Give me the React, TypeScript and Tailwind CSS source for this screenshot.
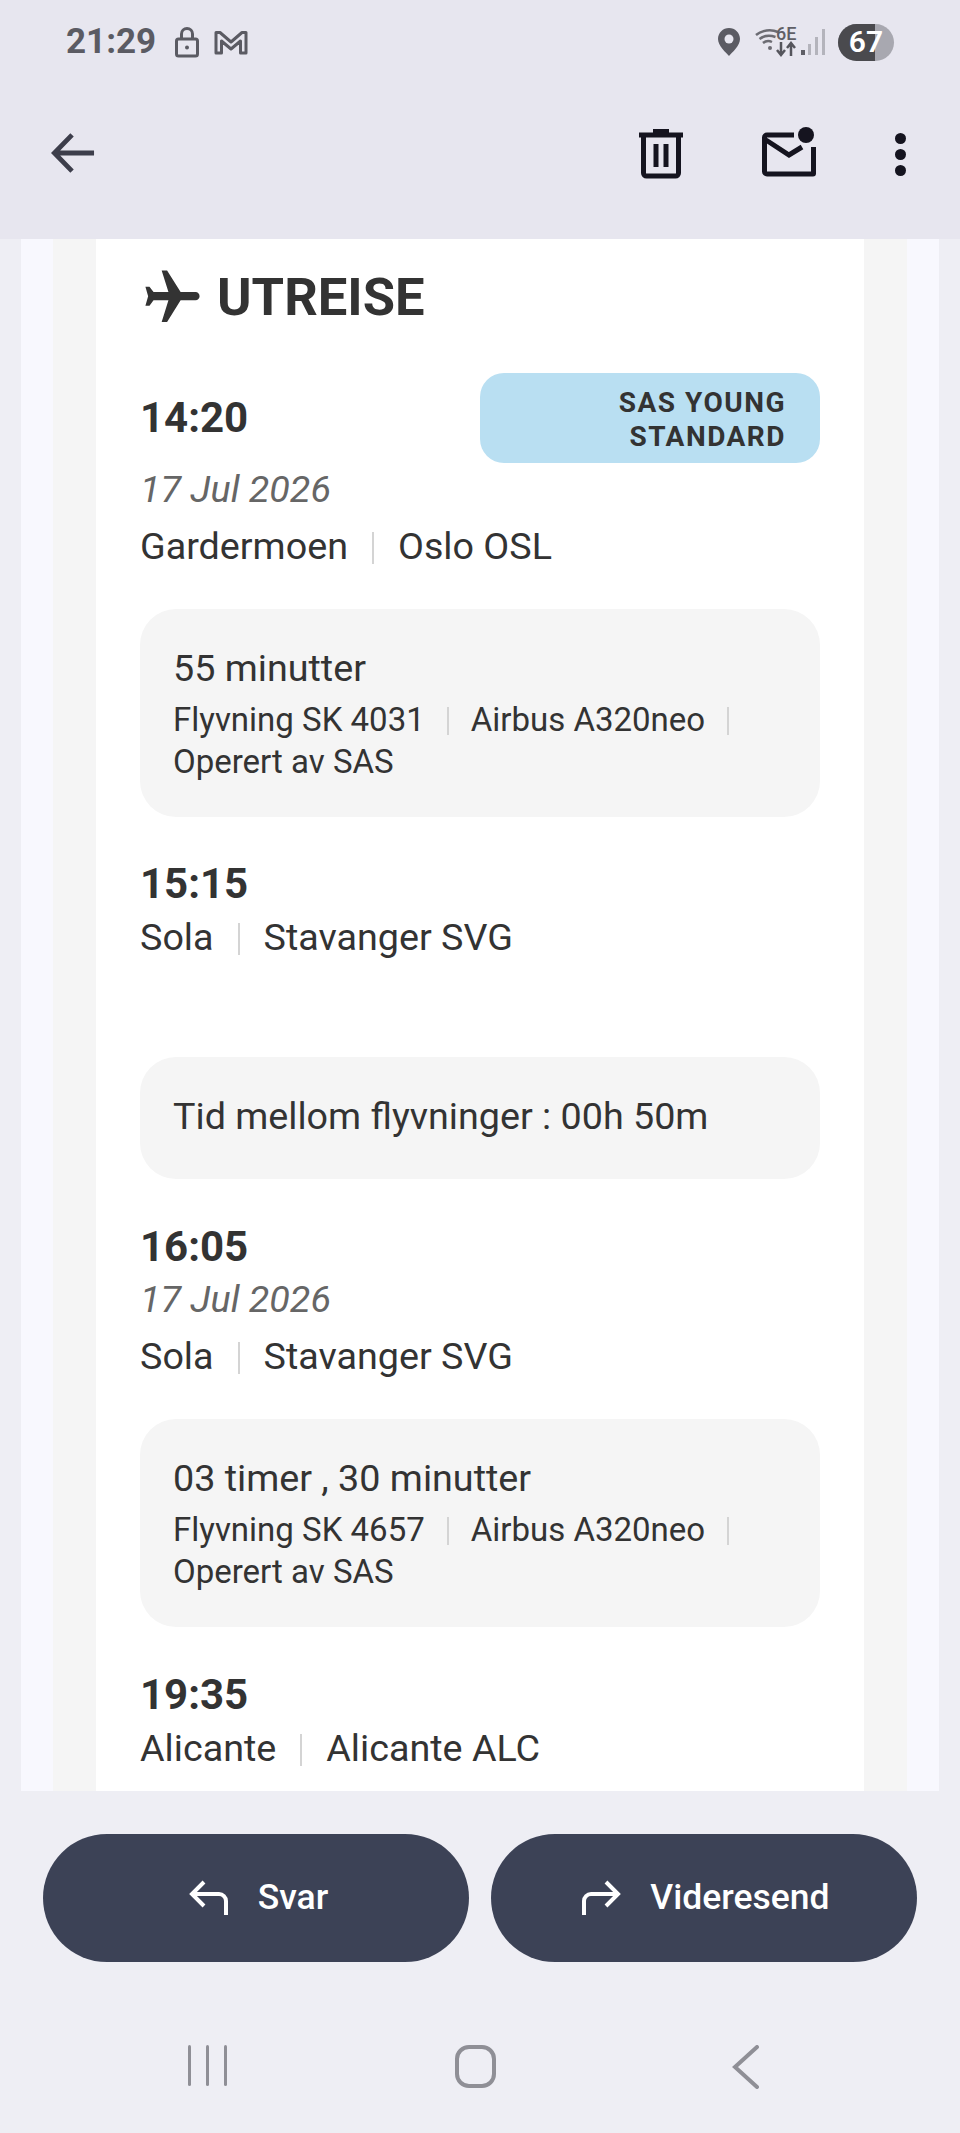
import React from 'react';
import { MdFlight } from 'react-icons/md';

const FONT = "font-['Roboto','Liberation_Sans',sans-serif]";

// Tynn skillestrek mellom feltene i en rad
const Sep = () => <span className="mx-[24px] inline-block h-[32px] w-[2px] bg-[#d4d4d4] align-[-5px]" />;

const Place = ({ a, b }: { a: string; b: string }) => (
  <div className="text-[37.7px] leading-[48px] text-[#333333]">
    {a}
    <Sep />
    {b}
  </div>
);

const Time = ({ children }: { children: string }) => (
  <div className="text-[42px] font-bold leading-[50px] text-[#333333]">{children}</div>
);

const DateText = () => <div className="text-[37.7px] italic leading-[48px] text-[#666666]">17 Jul 2026</div>;

const FlightCard = ({ duration, flight }: { duration: string; flight: string }) => (
  <div className="rounded-[36px] bg-[#f5f5f5] px-[33px] pb-[34px] pt-[35px] text-[#333333]">
    <div className="text-[37.7px] leading-[48px]">{duration}</div>
    <div className="mt-[7px] text-[33px] leading-[42px]">
      {flight}
      <span className="mx-[22px] inline-block h-[28px] w-[2px] bg-[#d4d4d4] align-[-4px]" />
      Airbus A320neo
      <span className="mx-[22px] inline-block h-[28px] w-[2px] bg-[#d4d4d4] align-[-4px]" />
      <br />
      Operert av SAS
    </div>
  </div>
);

const StatusBar = () => (
  <div className="flex h-[84px] items-center pl-[66px] pr-[66px] text-[#5b5b63]">
    <span className="text-[35px] font-bold">21:29</span>
    <svg className="ml-[18px]" width="26" height="32" viewBox="0 0 26 32" fill="none" stroke="#5b5b63" strokeWidth="3">
      <rect x="2.5" y="13" width="21" height="17" rx="2" />
      <path d="M7.5 13V8a5.5 5.5 0 0 1 11 0v5" />
      <circle cx="13" cy="21.5" r="2" fill="#5b5b63" stroke="none" />
    </svg>
    <svg className="ml-[14px]" width="34" height="26" viewBox="0 0 34 26" fill="none" stroke="#5b5b63" strokeWidth="3" strokeLinejoin="round">
      <path d="M2 24V3.500h4L17 13 28 3.500h4V24h-5.500V12L17 20 7.500 12v12z" />
    </svg>
    <div className="ml-auto flex items-center">
      <svg width="22" height="28" viewBox="0 0 22 28">
        <path d="M11 0C5 0 0 4.800 0 11c0 7 8 13.500 11 17 3-3.500 11-10 11-17C22 4.800 17 0 11 0z" fill="#5b5b63" />
        <circle cx="11" cy="11" r="4.500" fill="#e7e6ef" />
      </svg>
      <div className="relative ml-[15px] h-[30px] w-[40px]">
        <svg className="absolute left-0 top-0" width="24" height="24" viewBox="0 0 24 24" fill="none" stroke="#6c6c73" strokeWidth="2.500">
          <path d="M1 8c6-5 15-6 22-3M4.500 12c4-3 10-4 16-2M8 16c2.500-2 6-2.500 9-1" />
          <circle cx="15" cy="21" r="2" fill="#6c6c73" stroke="none" />
        </svg>
        <span className="absolute left-[21px] top-[-2px] text-[18px] font-medium leading-[18px] text-[#5f5f66]">6E</span>
        <svg className="absolute left-[20px] top-[14px]" width="22" height="16" viewBox="0 0 22 16" fill="none" stroke="#55555c" strokeWidth="2.500">
          <path d="M6 1v12M2 9l4 5 4-5M16 15V3M12 7l4-5 4 5" />
        </svg>
      </div>
      <svg className="ml-[6px]" width="24" height="26" viewBox="0 0 24 26">
        <rect x="0" y="21" width="4" height="5" fill="#5f5f66" />
        <rect x="7" y="15" width="3" height="11" fill="#b4b4bc" />
        <rect x="14" y="8" width="3" height="18" fill="#b4b4bc" />
        <rect x="21" y="0" width="3" height="26" fill="#b4b4bc" />
      </svg>
      <div className="relative ml-[13px] h-[37px] w-[56px] overflow-hidden rounded-full bg-[#a8a8b0]">
        <div className="absolute inset-y-0 left-0 w-[37px] bg-[#4a4a4e]" />
        <span className="absolute inset-0 flex items-center justify-center text-[30px] font-semibold leading-none text-white">67</span>
      </div>
    </div>
  </div>
);

const Toolbar = () => (
  <div className="flex h-[155px] items-start pt-[46px]">
    <svg className="ml-[51px]" width="44" height="46" viewBox="0 0 46 46" fill="none" stroke="#3d3e4b" strokeWidth="5">
      <path d="M45 23H5M22 4 3.500 23 22 42" />
    </svg>
    <svg className="ml-[544px] mt-[-1px]" width="44" height="50" viewBox="0 0 44 50" fill="none" stroke="#15141f" strokeWidth="5">
      <path d="M0 6h44M14 2.500h16M4.500 6v38a3 3 0 0 0 3 3h29a3 3 0 0 0 3-3V6" />
      <path d="M17 15v23M27 15v23" />
    </svg>
    <svg className="ml-[79px] mt-[-3px]" width="54" height="50" viewBox="0 0 54 50" fill="none" stroke="#15141f" strokeWidth="5">
      <path d="M32 8H5a2.500 2.500 0 0 0-2.500 2.500v34A2.500 2.500 0 0 0 5 47h46a.5.5 0 0 0 .5-.5V20" />
      <path d="M4 13l23 15 13-8" />
      <circle cx="44" cy="8" r="8" fill="#15141f" stroke="none" />
    </svg>
    <div className="ml-[79px] flex flex-col gap-[5px] pt-[3px]">
      <span className="h-[11px] w-[11px] rounded-full bg-[#15141f]" />
      <span className="h-[11px] w-[11px] rounded-full bg-[#15141f]" />
      <span className="h-[11px] w-[11px] rounded-full bg-[#15141f]" />
    </div>
  </div>
);

const Itinerary = () => (
  <div className="h-full bg-white px-[44px]">
    <div className="flex h-[116px] items-center">
      <MdFlight className="rotate-90 text-[#333333]" size={65} />
      <h1 className="ml-[12px] text-[52.500px] font-bold leading-none text-[#333333]">UTREISE</h1>
    </div>

    <div className="mt-[18px] flex items-center justify-between">
      <Time>14:20</Time>
      <div className="w-[340px] rounded-[24px] bg-[#b9dff2] px-[34px] pb-[9px] pt-[13px] text-right text-[28px] font-bold leading-[34px] tracking-[1.5px] text-[#333333]">
        SAS YOUNG
        <br />
        STANDARD
      </div>
    </div>
    <div className="mt-[2px]">
      <DateText />
    </div>
    <div className="mt-[9px]">
      <Place a="Gardermoen" b="Oslo OSL" />
    </div>

    <div className="mt-[39px]">
      <FlightCard duration="55 minutter" flight="Flyvning SK 4031" />
    </div>

    <div className="mt-[42px]">
      <Time>15:15</Time>
    </div>
    <div className="mt-[4px]">
      <Place a="Sola" b="Stavanger SVG" />
    </div>

    <div className="mt-[96px] flex h-[122px] items-center rounded-[36px] bg-[#f5f5f5] px-[33px] pb-[3px] text-[37.7px] text-[#333333]">
      Tid mellom flyvninger : 00h 50m
    </div>

    <div className="mt-[43px]">
      <Time>16:05</Time>
    </div>
    <div className="mt-[3px]">
      <DateText />
    </div>
    <div className="mt-[9px]">
      <Place a="Sola" b="Stavanger SVG" />
    </div>

    <div className="mt-[39px]">
      <FlightCard duration="03 timer , 30 minutter" flight="Flyvning SK 4657" />
    </div>

    <div className="mt-[43px]">
      <Time>19:35</Time>
    </div>
    <div className="mt-[4px]">
      <Place a="Alicante" b="Alicante ALC" />
    </div>
  </div>
);

const ActionButton = ({ label, flip }: { label: string; flip?: boolean }) => (
  <button
    className={`flex h-[128px] w-[426px] items-center justify-center gap-[29px] rounded-full bg-[#3c4256] text-[35.5px] font-medium text-white ${
      flip ? 'pl-[3px]' : 'pl-[5px]'
    }`}
  >
    <svg className={flip ? '-scale-x-100' : ''} width="40" height="36" viewBox="0 0 40 36" fill="none" stroke="white" strokeWidth="4">
      <path d="M15 2 3 14l12 12M3 14h27a7 7 0 0 1 7 7v14" />
    </svg>
    {label}
  </button>
);

const NavBar = () => (
  <div className="mt-[83px] flex items-start">
    <div className="ml-[188px] flex gap-[15px]">
      <span className="h-[41px] w-[3px] rounded-full bg-[#8f8f96]" />
      <span className="h-[41px] w-[3px] rounded-full bg-[#8f8f96]" />
      <span className="h-[41px] w-[3px] rounded-full bg-[#8f8f96]" />
    </div>
    <span className="ml-[228px] h-[43px] w-[41px] rounded-[14px] border-[4px] border-[#8f8f96]" />
    <svg className="ml-[236px]" width="28" height="44" viewBox="0 0 28 44" fill="none" stroke="#8f8f96" strokeWidth="4" strokeLinecap="round">
      <path d="M25 2 3 22l22 20" />
    </svg>
  </div>
);

export default function App() {
  return (
    <div className={`${FONT} flex h-[2133px] w-[960px] flex-col overflow-hidden bg-[#eeeef4]`}>
      <header className="h-[239px] bg-[#e7e6ef]">
        <StatusBar />
        <Toolbar />
      </header>

      <main className="h-[1552px] overflow-hidden px-[21px]">
        <div className="h-full bg-[#f8f8fe] px-[32px]">
          <div className="h-full bg-[#f5f5f5] px-[43px]">
            <Itinerary />
          </div>
        </div>
      </main>

      <div className="flex gap-[22px] px-[43px] pt-[43px]">
        <ActionButton label="Svar" />
        <ActionButton label="Videresend" flip />
      </div>
      <NavBar />
    </div>
  );
}
